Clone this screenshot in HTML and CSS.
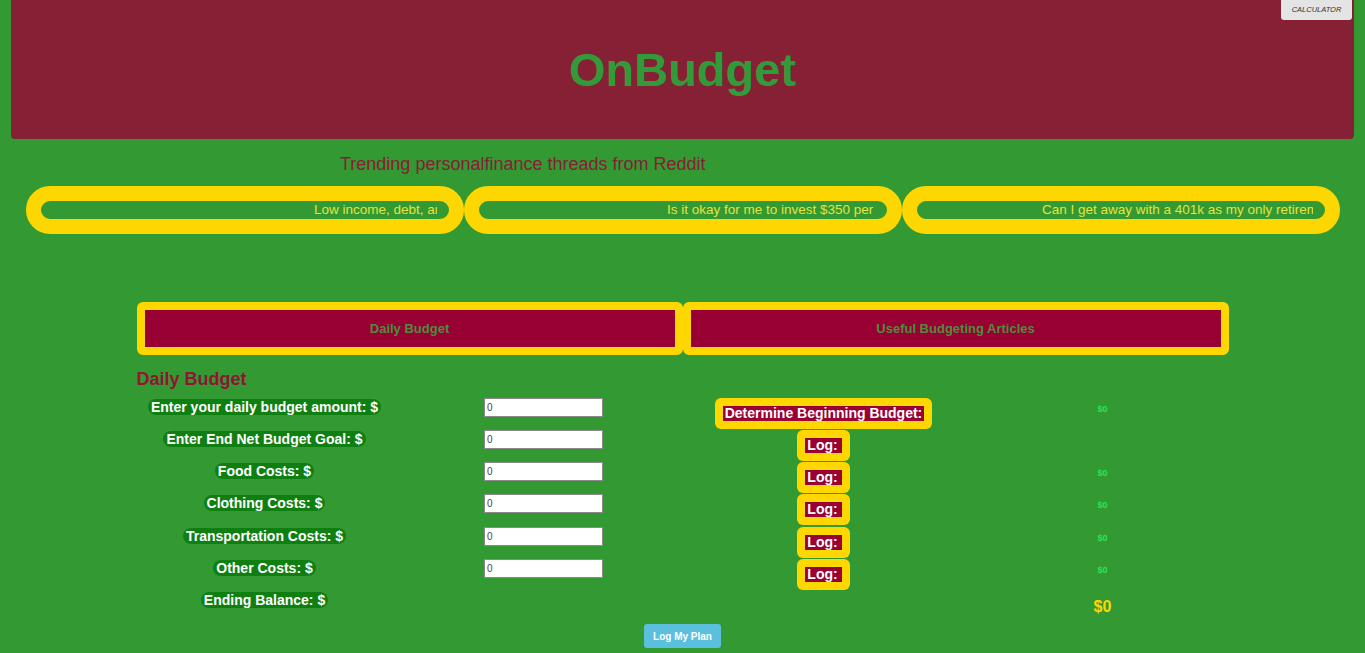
FILE: index.html
```html
<!DOCTYPE html>
<html lang="en">
<head>
<meta charset="utf-8">
<title>OnBudget</title>
<link rel="stylesheet" href="styles.css">
</head>
<body>
<button class="calc">CALCULATOR</button>
<header class="top">
  <h1 class="brand">OnBudget</h1>
</header>

<div class="trending-title">Trending personalfinance threads from Reddit</div>
<div class="threads">
  <div class="thread"><div class="thread-clip"><span class="thread-text t1">Low income, debt, and no savings. Where do I start?</span></div></div>
  <div class="thread"><div class="thread-clip"><span class="thread-text t2">Is it okay for me to invest $350 per month?</span></div></div>
  <div class="thread"><div class="thread-clip"><span class="thread-text t3">Can I get away with a 401k as my only retirement account?</span></div></div>
</div>

<main class="main">
  <nav class="tabs">
    <div class="tab">Daily Budget</div>
    <div class="tab tab-alt">Useful Budgeting Articles</div>
  </nav>

  <h2 class="section-title">Daily Budget</h2>

  <div class="budget-grid">
    <div class="cell-label"><span class="pill">Enter your daily budget amount: $</span></div>
    <div class="cell-input"><input class="num" type="text" value="0"></div>
    <div class="cell-box"><span class="ybox"><span class="ytext">Determine Beginning Budget:</span></span></div>
    <div class="cell-val"><span class="val">$0</span></div>

    <div class="cell-label"><span class="pill">Enter End Net Budget Goal: $</span></div>
    <div class="cell-input"><input class="num" type="text" value="0"></div>
    <div class="cell-box"><span class="ybox"><span class="ytext log">Log:</span></span></div>
    <div class="cell-val"></div>

    <div class="cell-label"><span class="pill">Food Costs: $</span></div>
    <div class="cell-input"><input class="num" type="text" value="0"></div>
    <div class="cell-box"><span class="ybox"><span class="ytext log">Log:</span></span></div>
    <div class="cell-val"><span class="val">$0</span></div>

    <div class="cell-label"><span class="pill">Clothing Costs: $</span></div>
    <div class="cell-input"><input class="num" type="text" value="0"></div>
    <div class="cell-box"><span class="ybox"><span class="ytext log">Log:</span></span></div>
    <div class="cell-val"><span class="val">$0</span></div>

    <div class="cell-label"><span class="pill">Transportation Costs: $</span></div>
    <div class="cell-input"><input class="num" type="text" value="0"></div>
    <div class="cell-box"><span class="ybox"><span class="ytext log">Log:</span></span></div>
    <div class="cell-val"><span class="val">$0</span></div>

    <div class="cell-label"><span class="pill">Other Costs: $</span></div>
    <div class="cell-input"><input class="num" type="text" value="0"></div>
    <div class="cell-box"><span class="ybox"><span class="ytext log">Log:</span></span></div>
    <div class="cell-val"><span class="val">$0</span></div>

    <div class="cell-label"><span class="pill">Ending Balance: $</span></div>
    <div class="cell-input"></div>
    <div class="cell-box"></div>
    <div class="cell-val"><span class="total">$0</span></div>
  </div>

  <button class="plan-btn">Log My Plan</button>
</main>
</body>
</html>
```

FILE: styles.css
```css
html, body {
  margin: 0;
  padding: 0;
}

body {
  background: #339933;
  font-family: "Liberation Sans", Arial, sans-serif;
  min-height: 653px;
  position: relative;
  overflow: hidden;
}

.calc {
  position: absolute;
  top: 0;
  right: 13px;
  width: 71px;
  height: 20px;
  padding: 0;
  border: none;
  border-radius: 0 0 3px 3px;
  background: #e4e4e4;
  color: #333;
  font-family: "Liberation Sans", Arial, sans-serif;
  font-style: italic;
  font-size: 7.5px;
  line-height: 18px;
  z-index: 2;
}

.top {
  margin: 0 11px;
  height: 139px;
  background: #862035;
  border-radius: 0 0 4px 4px;
  display: flex;
  align-items: center;
  justify-content: center;
}

.brand {
  margin: 0;
  font-size: 47px;
  font-weight: bold;
  color: #339a3a;
  line-height: 56px;
}

.trending-title {
  margin-top: 15px;
  padding-left: 340px;
  font-size: 18px;
  line-height: 21px;
  color: #862035;
}

.threads {
  display: flex;
  margin: 11px 0 0 26px;
}

.thread {
  flex: 0 0 438px;
  width: 438px;
  min-width: 0;
  box-sizing: border-box;
  height: 48px;
  border: 15px solid #ffd700;
  border-radius: 24px;
  background: #339933;
  padding: 0 12px;
  overflow: hidden;
}

.thread-clip {
  overflow: hidden;
  white-space: nowrap;
  height: 18px;
  line-height: 18px;
  font-size: 13.5px;
  color: #e6e33c;
}

.thread-text { display: inline-block; }
.t1 { padding-left: 261px; }
.t2 { padding-left: 176px; }
.t3 { padding-left: 113px; }

.main {
  width: 1092px;
  margin: 68px auto 0;
}

.tabs {
  display: flex;
}

.tab {
  flex: 1 1 0;
  box-sizing: border-box;
  height: 53px;
  border: 8px solid #ffd700;
  border-radius: 6px;
  background: #990033;
  color: #4f8c3c;
  font-weight: bold;
  font-size: 13px;
  line-height: 37px;
  text-align: center;
}

.section-title {
  margin: 14px 0 0;
  font-size: 18px;
  line-height: 21px;
  font-weight: bold;
  color: #8f1533;
}

.budget-grid {
  margin-top: 8px;
  display: grid;
  grid-template-columns: 256px 302px 258px 276px;
  grid-auto-rows: 32.17px;
  align-items: start;
}

.cell-label { text-align: center; }

.pill {
  display: inline-block;
  background: #0f7f12;
  color: #fff;
  font-weight: bold;
  font-size: 14px;
  line-height: 16px;
  padding: 0 3px;
  border-radius: 8px;
}

.cell-input {
  display: flex;
  justify-content: center;
}

.num {
  box-sizing: border-box;
  width: 119px;
  height: 19px;
  margin: 0;
  padding: 0 2px;
  border: 1px solid #8a8a8a;
  background: #fff;
  font-family: "Liberation Sans", Arial, sans-serif;
  font-size: 10px;
  color: #444;
}

.cell-box { text-align: center; }

.ybox {
  display: inline-block;
  background: #ffd700;
  border-radius: 6px;
  padding: 8px;
}

.ytext {
  display: block;
  background: #990033;
  color: #fff;
  font-weight: bold;
  font-size: 14px;
  line-height: 15px;
  padding: 0 1.5px;
}

.ytext.log { padding: 0 4px 0 2px; }

.cell-val {
  text-align: center;
  padding-left: 24px;
}

.val {
  display: inline-block;
  padding-top: 4px;
  font-size: 9px;
  line-height: 12px;
  font-weight: bold;
  color: #2de35c;
}

.total {
  display: inline-block;
  padding-top: 7px;
  font-size: 16px;
  line-height: 18px;
  font-weight: bold;
  color: #ffd700;
}

.plan-btn {
  display: block;
  margin: 1px auto 0;
  height: 24px;
  padding: 0 9px;
  border: none;
  border-radius: 3px;
  background: #5bc0de;
  color: #fff;
  font-family: "Liberation Sans", Arial, sans-serif;
  font-weight: bold;
  font-size: 10px;
}
```
